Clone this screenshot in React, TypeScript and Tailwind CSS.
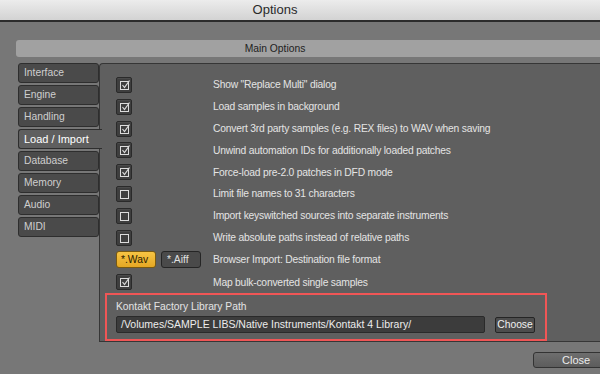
import React from "react";

const tabs = ["Interface", "Engine", "Handling", "Load / Import", "Database", "Memory", "Audio", "MIDI"];

const options = [
  { label: 'Show "Replace Multi" dialog', checked: true },
  { label: "Load samples in background", checked: true },
  { label: "Convert 3rd party samples (e.g. REX files) to WAV when saving", checked: true },
  { label: "Unwind automation IDs for additionally loaded patches", checked: true },
  { label: "Force-load pre-2.0 patches in DFD mode", checked: true },
  { label: "Limit file names to 31 characters", checked: false },
  { label: "Import keyswitched sources into separate instruments", checked: false },
  { label: "Write absolute paths instead of relative paths", checked: false },
];

function CheckBox({ checked }: { checked: boolean }) {
  return (
    <div className="w-[16px] h-[16px] rounded-[2px] bg-[#3e3e3e] border border-[#2a2a2a] shadow-[inset_0_1px_0_#4a4a4a]">
      <svg width="14" height="14" viewBox="0 0 14 14" className="block">
        <rect x="3.5" y="3.5" width="8" height="8" fill="none" stroke="#dcdcdc" strokeWidth="1" />
        {checked && <polyline points="5.5,7 7.5,9.5 12.5,2.5" fill="none" stroke="#dcdcdc" strokeWidth="1.2" />}
      </svg>
    </div>
  );
}

export default function App() {
  return (
    <div className="w-[600px] h-[374px] overflow-hidden bg-[#7a7a7a] flex flex-col font-['Liberation_Sans_Narrow','Liberation_Sans',sans-serif] text-[10.3px]">
      <div className="h-[22px] shrink-0 bg-gradient-to-b from-[#ececec] to-[#d3d3d3] border-b-2 border-[#2c2c2c] flex">
        <div className="w-[550px] flex items-center justify-center text-[13px] text-[#2a2a2a] font-['Liberation_Sans',sans-serif]">
          Options
        </div>
      </div>

      <div className="flex-1 bg-[#777] pl-[16px] pt-[18px] flex flex-col">
        <div className="h-[17px] w-[620px] shrink-0 bg-[#a1a1a1] rounded-[3px] flex">
          <div className="w-[518px] flex items-center justify-center text-[#222]">Main Options</div>
        </div>

        <div className="flex mt-[6px] h-[279px]">
          <div className="w-[85px] pl-[2px] flex flex-col gap-[2px] shrink-0">
            {tabs.map((t) => {
              const active = t === "Load / Import";
              return active ? (
                <div
                  key={t}
                  className="relative z-10 w-[84px] h-[20px] bg-[#5f5f5f] border border-r-0 border-[#2e2e2e] rounded-l-[3px] pl-[5px] flex items-center text-white text-[11px]"
                >
                  {t}
                </div>
              ) : (
                <div
                  key={t}
                  className="w-[81px] h-[20px] bg-[#4a4a4a] border border-[#2e2e2e] rounded-[3px] pl-[5px] flex items-center text-[#cfcfcf]"
                >
                  {t}
                </div>
              );
            })}
          </div>

          <div className="w-[560px] shrink-0 -ml-[2px] bg-[#5f5f5f] border border-r-0 border-[#363636] rounded-tl-[4px] flex flex-col pt-[10px]">
            {options.map((o) => (
              <div key={o.label} className="h-[22px] flex items-center pl-[16px]">
                <div className="w-[97px]">
                  <CheckBox checked={o.checked} />
                </div>
                <span className="text-[#e4e4e4] tracking-[-0.2px]">{o.label}</span>
              </div>
            ))}
            <div className="h-[22px] flex items-center pl-[16px]">
              <div className="w-[97px] flex gap-[5px]">
                <div className="w-[40px] h-[17px] rounded-[3px] bg-gradient-to-b from-[#f7c443] to-[#e5a823] border border-[#7a5a10] text-[#2a2000] flex items-center pl-[4px]">
                  *.Wav
                </div>
                <div className="w-[40px] h-[17px] rounded-[3px] bg-[#4a4a4a] border border-[#252525] text-[#e0e0e0] flex items-center pl-[5px]">
                  *.Aiff
                </div>
              </div>
              <span className="text-[#e4e4e4] tracking-[-0.2px]">Browser Import: Destination file format</span>
            </div>
            <div className="h-[22px] flex items-center pl-[16px] mt-[1px]">
              <div className="w-[97px]">
                <CheckBox checked />
              </div>
              <span className="text-[#e4e4e4] tracking-[-0.2px]">Map bulk-converted single samples</span>
            </div>

            <div className="ml-[5px] w-[442px] h-[48px] border-2 border-[#f05656] pl-[9px] pt-[5px] flex flex-col">
              <div className="text-[#e4e4e4] h-[14px] leading-[14px]">Kontakt Factory Library Path</div>
              <div className="flex items-center mt-[2px] gap-[10px]">
                <div className="w-[369px] h-[17px] bg-[#3c3c3c] border border-[#2a2a2a] rounded-[2px] pl-[4px] flex items-center text-[#ececec] text-[10.5px]">
                  /Volumes/SAMPLE LIBS/Native Instruments/Kontakt 4 Library/
                </div>
                <div className="w-[40px] h-[16px] bg-[#4d4d4d] border border-[#252525] rounded-[2px] flex items-center justify-center text-[#f0f0f0]">
                  Choose
                </div>
              </div>
            </div>
          </div>
        </div>

        <div className="flex pl-[517px] mt-[10px]">
          <div className="w-[80px] h-[16px] shrink-0 rounded-[3px] bg-gradient-to-b from-[#6e6e6e] to-[#5c5c5c] border border-[#333] flex items-center pl-[28px] text-[#ececec] text-[11px]">
            Close
          </div>
        </div>
      </div>
    </div>
  );
}
